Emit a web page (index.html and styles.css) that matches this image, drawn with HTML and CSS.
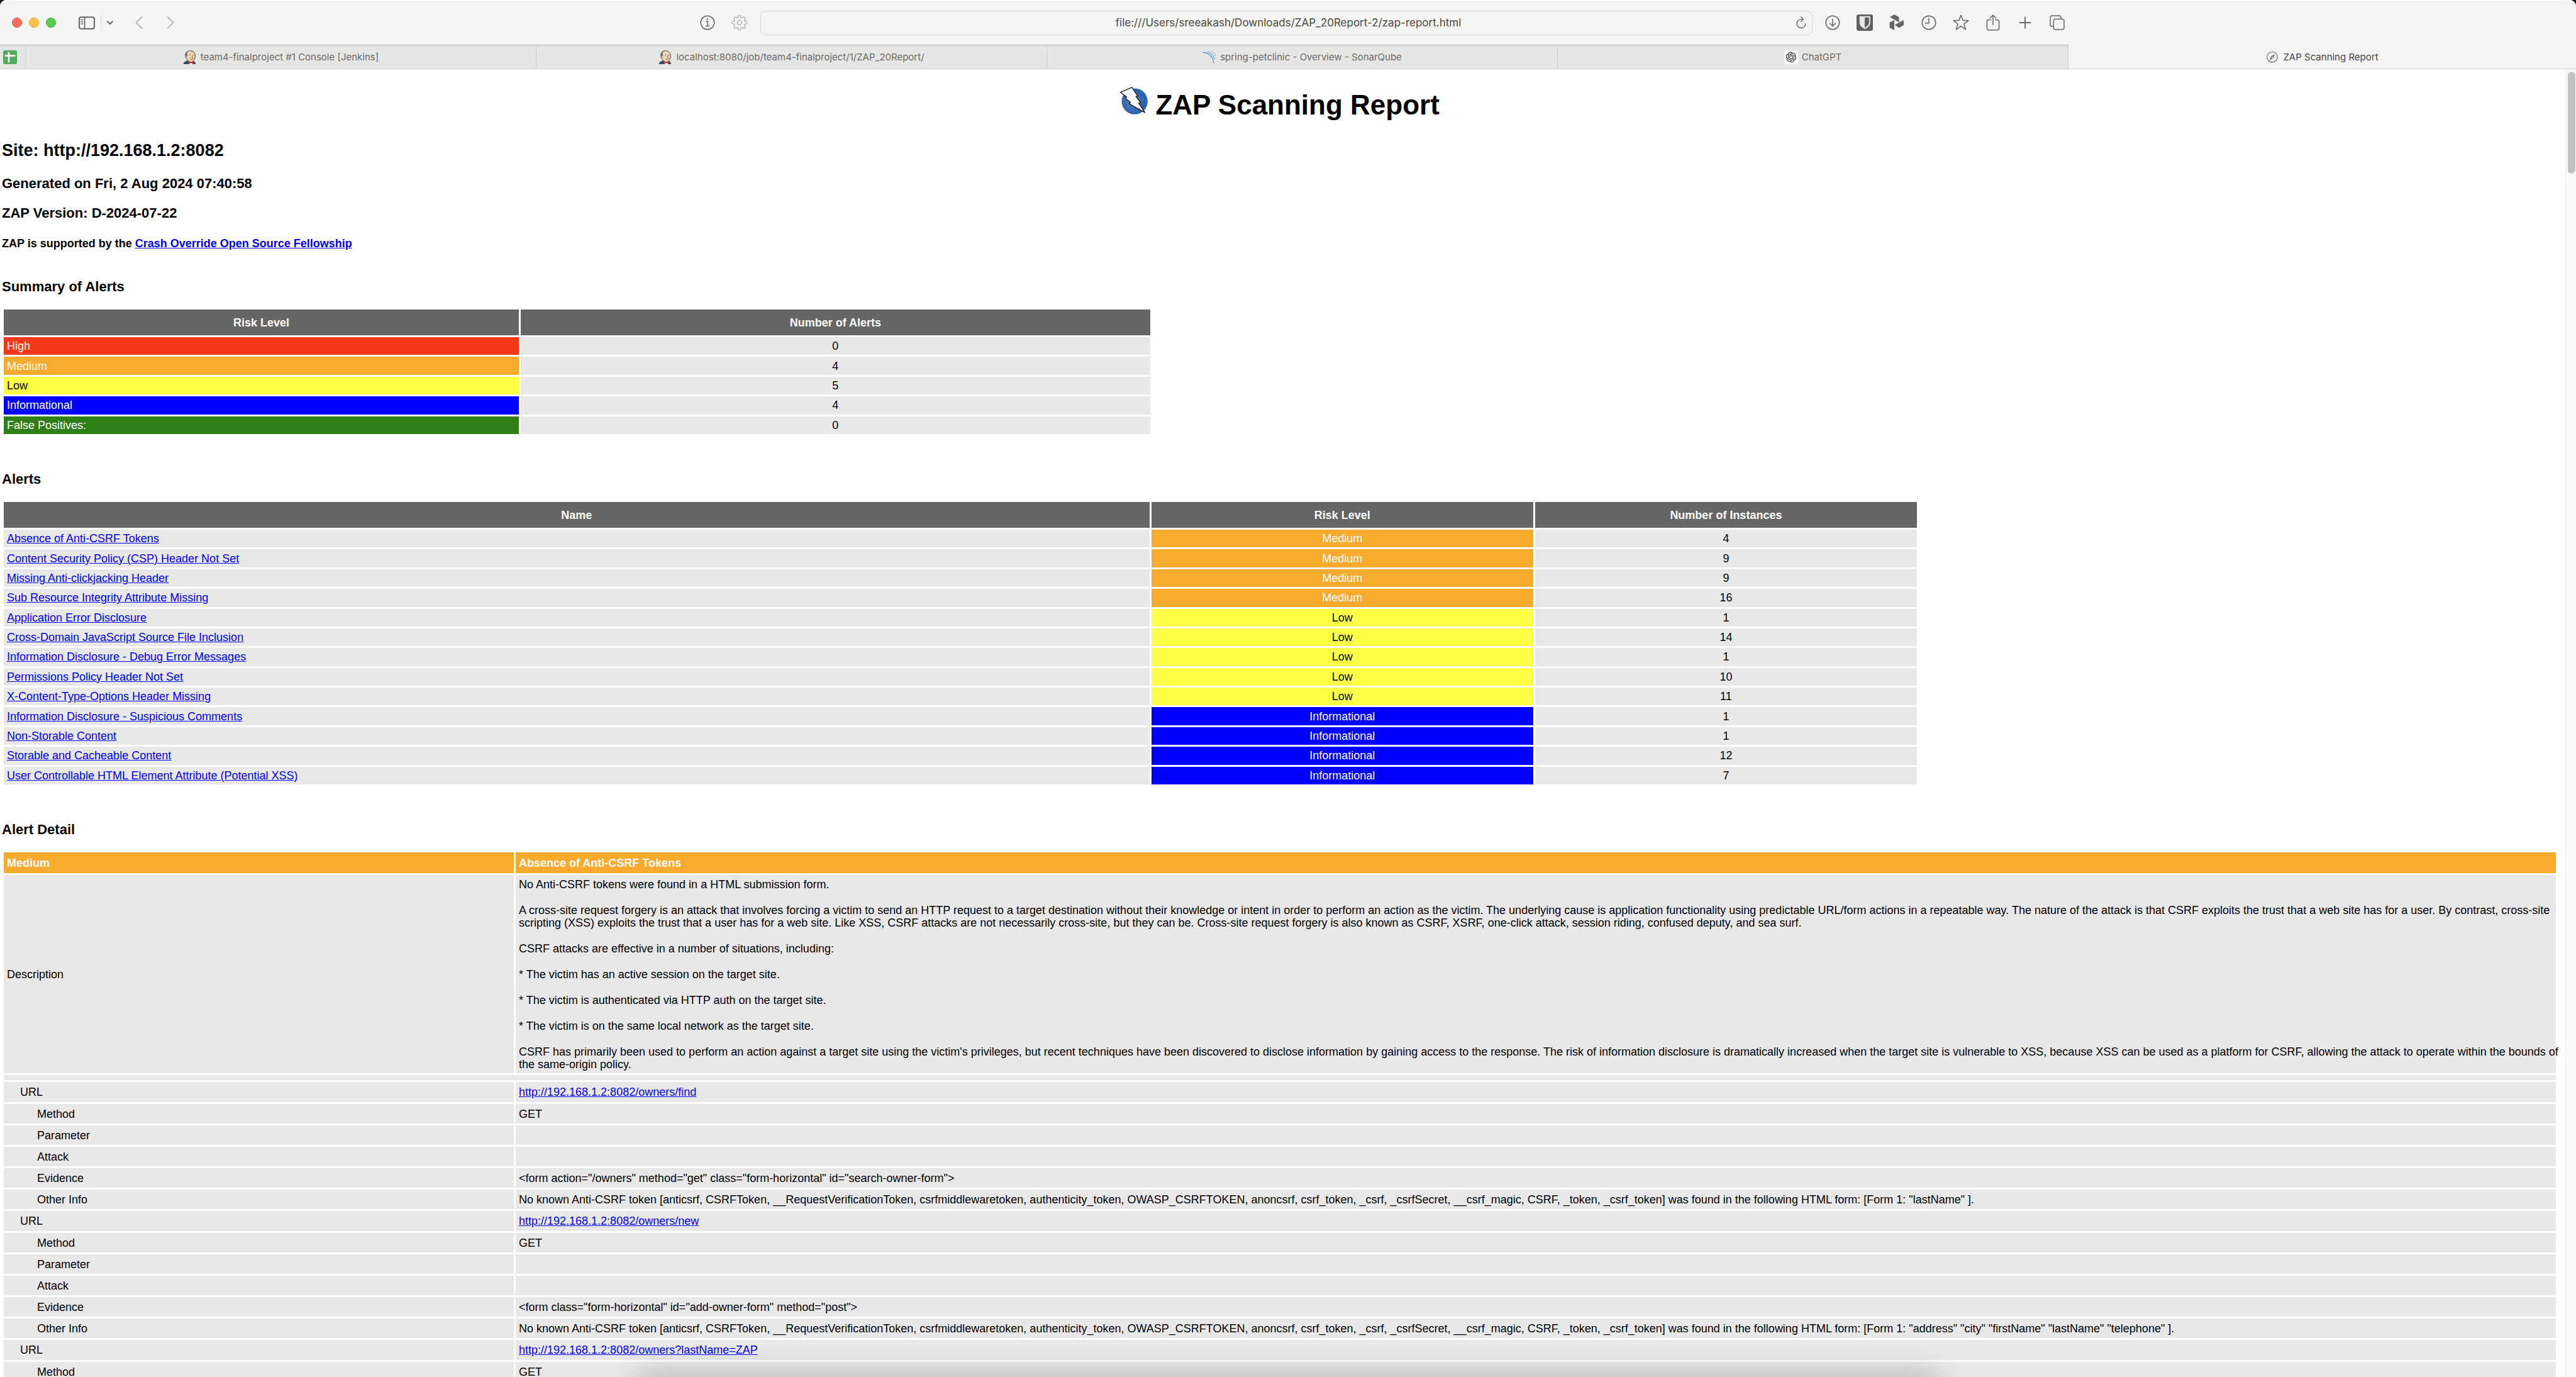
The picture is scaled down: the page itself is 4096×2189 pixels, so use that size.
FILE: index.html
```html
<!DOCTYPE html>
<html lang="en">
<head>
<meta charset="utf-8">
<title>ZAP Scanning Report</title>
<link rel="stylesheet" href="styles.css">
</head>
<body>
<svg class="defs" aria-hidden="true">
  <symbol id="jenkins" viewBox="0 0 32 32">
    <path d="M1 32c0-4 2-6 6-7l3-2h12l3 2c3 1 4 3 4 7z" fill="#335061"/>
    <path d="M12 23l3 9h7l-2-9z" fill="#f2f2ee"/>
    <path d="M6 14C4 7 9 1 16 1c8 0 12 5 12 12 0 8-4 14-9 14-6 0-10-4-11-9-2 0-3-2-2-4z" fill="#ecd6b4" stroke="#33302c" stroke-width="1.3"/>
    <path d="M6 13C4 7 8 2 13 1.500c-3 2-4 5-3 9l-1 4-2 1z" fill="#6c6a66"/>
    <path d="M15 11l3-1M22 11l3 0M21 13v4l2 1M17 20c3 2 5 1 6-1" fill="none" stroke="#4c3c30" stroke-width="1.2"/>
    <path d="M13 25l5 2 6-2v6l-6-2-5 2z" fill="#d33833"/>
  </symbol>
</svg>
<div class="window">
  <header class="toolbar">
    <div class="toolbar-left">
      <div class="lights">
        <button class="light light-close" aria-label="Close"></button>
        <button class="light light-min" aria-label="Minimise"></button>
        <button class="light light-max" aria-label="Zoom"></button>
      </div>
      <button class="tool sidebar-btn" aria-label="Sidebar"><svg width="26" height="21" viewBox="0 0 38 30"><rect x="1.500" y="1.500" width="35" height="27" rx="4.500" fill="none" stroke="currentColor" stroke-width="3"/><path d="M14 1v28" stroke="currentColor" stroke-width="2.500"/><path d="M5.500 8h4.500M5.500 12.500h4.500M5.500 17h4.500" stroke="currentColor" stroke-width="1.800" stroke-linecap="round"/></svg></button>
      <span class="tool-divider"></span>
      <button class="tool menu-btn" aria-label="Tab groups"><svg width="10" height="6" viewBox="0 0 15 9"><path d="M1.500 1.500l6 6 6-6" fill="none" stroke="currentColor" stroke-width="2.800" stroke-linecap="round" stroke-linejoin="round"/></svg></button>
      <button class="tool nav-btn dim" aria-label="Back"><svg width="12" height="20" viewBox="0 0 17 29"><path d="M15 1.500L2 14.500l13 13" fill="none" stroke="currentColor" stroke-width="2.600" stroke-linecap="round" stroke-linejoin="round"/></svg></button>
      <button class="tool nav-btn dim" aria-label="Forward"><svg width="12" height="20" viewBox="0 0 17 29"><path d="M2 1.500l13 13-13 13" fill="none" stroke="currentColor" stroke-width="2.600" stroke-linecap="round" stroke-linejoin="round"/></svg></button>
      <span class="spacer"></span>
      <button class="tool icon-btn" aria-label="Page info"><svg width="24" height="24" viewBox="0 0 35 35"><circle cx="17.500" cy="17.500" r="15.700" fill="none" stroke="currentColor" stroke-width="2.200"/><circle cx="17.300" cy="9.500" r="1.900" fill="currentColor"/><path d="M14 14.500h4v10.500M13.300 25.500h8.500" fill="none" stroke="currentColor" stroke-width="2.200"/></svg></button>
      <button class="tool icon-btn dim" aria-label="Settings"><svg width="26" height="26" viewBox="-19 -19 38 38"><g fill="none" stroke="currentColor" stroke-width="2.200" stroke-linecap="round" stroke-linejoin="round"><path id="tooth" d="M-3.600-12.500L-2.400-16.400Q0-18 2.400-16.400L3.600-12.500Q5-10.800 6.300-11.400"/><use href="#tooth" transform="rotate(45)"/><use href="#tooth" transform="rotate(90)"/><use href="#tooth" transform="rotate(135)"/><use href="#tooth" transform="rotate(180)"/><use href="#tooth" transform="rotate(225)"/><use href="#tooth" transform="rotate(270)"/><use href="#tooth" transform="rotate(315)"/><circle r="5"/></g></svg></button>
    </div>
    <form class="address">
      <input class="address-input" type="text" aria-label="Address" value="file:///Users/sreeakash/Downloads/ZAP_20Report-2/zap-report.html">
      <button class="tool reload" type="button" aria-label="Reload"><svg width="18" height="20" viewBox="0 0 26 29"><path d="M17 7H13a10 10 0 1 0 10 10" fill="none" stroke="currentColor" stroke-width="2" stroke-linecap="round"/><path d="M12.500 1.500L18 7l-5.500 5.500" fill="none" stroke="currentColor" stroke-width="2" stroke-linecap="round" stroke-linejoin="round"/></svg></button>
    </form>
    <div class="toolbar-right">
      <button class="tool icon-btn" aria-label="Downloads"><svg width="24" height="24" viewBox="0 0 35 35"><g fill="none" stroke="currentColor" stroke-width="2.200" stroke-linecap="round" stroke-linejoin="round"><circle cx="17.500" cy="17.500" r="15.700"/><path d="M17.500 9v16M11.500 19.500l6 6 6-6"/></g></svg></button>
      <button class="tool icon-btn" aria-label="Bitwarden"><svg width="26" height="26" viewBox="0 0 38 38"><rect width="38" height="38" rx="5" fill="#5f5f5d"/><path d="M7 4h25v15c0 8-7 12-12.500 15C14 31 7 27 7 19z" fill="#e6e6e4"/><path d="M19 7h10v12c0 5-5 9-10 11.500z" fill="#5f5f5d"/></svg></button>
      <button class="tool icon-btn" aria-label="Extension"><svg width="26" height="26" viewBox="0 0 38 38"><path d="M2.700 6L13.300 0l11 6.300v12zM2.300 18.700l11-6V37l-11-6.300zM14 24.300l21-11.600v12L24.300 31z" fill="currentColor"/></svg></button>
      <button class="tool icon-btn" aria-label="History"><svg width="24" height="24" viewBox="0 0 35 35"><g fill="none" stroke="currentColor" stroke-width="2.200" stroke-linecap="round" stroke-linejoin="round"><circle cx="17.500" cy="17.500" r="15.700"/><path d="M17.500 7v11.500H9"/></g></svg></button>
      <button class="tool icon-btn" aria-label="Bookmark"><svg width="26" height="26" viewBox="0 0 38 38"><path d="M19 1.500l4.500 12.200 13 .4-10.300 8 3.800 12.700-11-7.500-11 7.500 3.800-12.700-10.300-8 13-.4z" fill="none" stroke="currentColor" stroke-width="2.200" stroke-linejoin="round"/></svg></button>
      <button class="tool icon-btn" aria-label="Share"><svg width="26" height="26" viewBox="0 0 38 38"><g fill="none" stroke="currentColor" stroke-width="2.200" stroke-linecap="round" stroke-linejoin="round"><path d="M14 12.500H9a4 4 0 0 0-4 4V32a4 4 0 0 0 4 4h20a4 4 0 0 0 4-4V16.500a4 4 0 0 0-4-4h-5M19 24V1.500M12.500 8L19 1.500 25.500 8"/></g></svg></button>
      <button class="tool icon-btn" aria-label="New tab"><svg width="20" height="20" viewBox="0 0 29 29"><path d="M14.500 2v25M2 14.500h25" stroke="currentColor" stroke-width="2.600" stroke-linecap="round"/></svg></button>
      <button class="tool icon-btn" aria-label="Tab overview"><svg width="24" height="24" viewBox="0 0 36 36"><g fill="none" stroke="currentColor" stroke-width="2.200"><path d="M9 27H6a4.500 4.500 0 0 1-4.500-4.500V6A4.500 4.500 0 0 1 6 1.500h16.500A4.500 4.500 0 0 1 27 6v3"/><rect x="9.500" y="9.500" width="25" height="25" rx="4.500"/></g></svg></button>
    </div>
  </header>

  <nav class="tabs" aria-label="Tabs">
    <a class="tab tab-pinned" href="#" aria-label="Sheets"><svg width="22" height="22" viewBox="0 0 32 32"><rect width="32" height="32" rx="4" fill="#53a95c"/><path d="M13 4v24M4 12.700h24" stroke="#fff" stroke-width="4"/></svg></a>
    <a class="tab" href="#"><svg width="22" height="22"><use href="#jenkins"/></svg>team4-finalproject #1 Console [Jenkins]</a>
    <a class="tab" href="#"><svg width="22" height="22"><use href="#jenkins"/></svg>localhost:8080/job/team4-finalproject/1/ZAP_20Report/</a>
    <a class="tab" href="#"><svg width="22" height="22" viewBox="0 0 32 32"><g fill="none" stroke="#549dd8"><path d="M1 4.700C15 5 26 17 26 30.700" stroke-width="2"/><path d="M11.500 2.500C20 6 26 13 28.700 21" stroke-width="1.600"/><path d="M20.500 1.500C25 4.500 28.500 8.500 30.700 13" stroke-width="1.200"/></g></svg>spring-petclinic - Overview - SonarQube</a>
    <a class="tab" href="#"><svg width="22" height="22" viewBox="-4 -4 32 32"><rect x="-4" y="-4" width="32" height="32" rx="5" fill="#fff"/><path fill="#222" d="M22.2819 9.8211a5.9847 5.9847 0 0 0-.5157-4.9108 6.0462 6.0462 0 0 0-6.5098-2.9A6.0651 6.0651 0 0 0 4.9807 4.1818a5.9847 5.9847 0 0 0-3.9977 2.9 6.0462 6.0462 0 0 0 .7427 7.0966 5.98 5.98 0 0 0 .511 4.9107 6.051 6.051 0 0 0 6.5146 2.9001A5.9847 5.9847 0 0 0 13.2599 24a6.0557 6.0557 0 0 0 5.7718-4.2058 5.9894 5.9894 0 0 0 3.9977-2.9001 6.0557 6.0557 0 0 0-.7475-7.0729zm-9.022 12.6081a4.4755 4.4755 0 0 1-2.8764-1.0408l.1419-.0804 4.7783-2.7582a.7948.7948 0 0 0 .3927-.6813v-6.7369l2.02 1.1686a.071.071 0 0 1 .038.052v5.5826a4.504 4.504 0 0 1-4.4945 4.4944zm-9.6607-4.1254a4.4708 4.4708 0 0 1-.5346-3.0137l.142.0852 4.783 2.7582a.7712.7712 0 0 0 .7806 0l5.8428-3.3685v2.3324a.0804.0804 0 0 1-.0332.0615L9.74 19.9502a4.4992 4.4992 0 0 1-6.1408-1.6464zM2.3408 7.8956a4.485 4.485 0 0 1 2.3655-1.9728V11.6a.7664.7664 0 0 0 .3879.6765l5.8144 3.3543-2.0201 1.1685a.0757.0757 0 0 1-.071 0l-4.8303-2.7865A4.504 4.504 0 0 1 2.3408 7.872zm16.5963 3.8558L13.1038 8.364 15.1192 7.2a.0757.0757 0 0 1 .071 0l4.8303 2.7913a4.4944 4.4944 0 0 1-.6765 8.1042v-5.6772a.79.79 0 0 0-.407-.667zm2.0107-3.0231l-.142-.0852-4.7735-2.7818a.7759.7759 0 0 0-.7854 0L9.409 9.2297V6.8974a.0662.0662 0 0 1 .0284-.0615l4.8303-2.7866a4.4992 4.4992 0 0 1 6.6802 4.66zM8.3065 12.863l-2.02-1.1638a.0804.0804 0 0 1-.038-.0567V6.0742a4.4992 4.4992 0 0 1 7.3757-3.4537l-.142.0805L8.704 5.459a.7948.7948 0 0 0-.3927.6813zm1.0976-2.3654l2.602-1.4998 2.6069 1.4998v2.9994l-2.5974 1.4997-2.6067-1.4997Z"/></svg>ChatGPT</a>
    <a class="tab tab-active" href="#" aria-current="page"><svg width="22" height="22" viewBox="0 0 32 32"><circle cx="16" cy="15.500" r="12" fill="none" stroke="#6a6a68" stroke-width="1.800"/><path d="M22 8.500l-3.500 9-9 5.500 3.500-9z" fill="#6a6a68"/><circle cx="16" cy="15.700" r="1.400" fill="#f4f4f2"/></svg>ZAP Scanning Report</a>
  </nav>

  <div class="viewport">
    <main class="report">
      <h1><svg class="logo" width="44" height="44" viewBox="0 0 192 192"><defs><radialGradient id="ball" cx="0.400" cy="0.500" r="0.600"><stop offset="0" stop-color="#5c7cb8"/><stop offset="0.700" stop-color="#2f66b0"/><stop offset="1" stop-color="#1d5fae"/></radialGradient></defs><circle cx="101" cy="101" r="90" fill="url(#ball)"/><path d="M82 4L3 38l42 32-7 11 33 26-7 11 108 60-43-65 14-4-33-41 12-4z" fill="#fff" stroke="#1c1c1c" stroke-width="6" stroke-linejoin="round"/></svg> ZAP Scanning Report</h1>
      <h2>Site: http://192.168.1.2:8082</h2>
      <h3 class="generated">Generated on Fri, 2 Aug 2024 07:40:58</h3>
      <h3 class="version">ZAP Version: D-2024-07-22</h3>
      <h4>ZAP is supported by the <a href="#">Crash Override Open Source Fellowship</a></h4>

      <h3 class="summary-title">Summary of Alerts</h3>
      <table class="summary">
        <colgroup><col class="w45"><col class="w55"></colgroup>
        <thead><tr><th>Risk Level</th><th>Number of Alerts</th></tr></thead>
        <tbody>
          <tr><td class="high">High</td><td class="num">0</td></tr>
          <tr><td class="medium">Medium</td><td class="num">4</td></tr>
          <tr><td class="low">Low</td><td class="num">5</td></tr>
          <tr><td class="info">Informational</td><td class="num">4</td></tr>
          <tr><td class="false-positive">False Positives:</td><td class="num">0</td></tr>
        </tbody>
      </table>

      <h3 class="section-title">Alerts</h3>
      <table class="alerts">
        <colgroup><col class="w60"><col class="w20"><col class="w20"></colgroup>
        <thead><tr><th>Name</th><th>Risk Level</th><th>Number of Instances</th></tr></thead>
        <tbody>
          <tr><td><a href="#detail">Absence of Anti-CSRF Tokens</a></td><td class="num medium">Medium</td><td class="num">4</td></tr>
          <tr><td><a href="#">Content Security Policy (CSP) Header Not Set</a></td><td class="num medium">Medium</td><td class="num">9</td></tr>
          <tr><td><a href="#">Missing Anti-clickjacking Header</a></td><td class="num medium">Medium</td><td class="num">9</td></tr>
          <tr><td><a href="#">Sub Resource Integrity Attribute Missing</a></td><td class="num medium">Medium</td><td class="num">16</td></tr>
          <tr><td><a href="#">Application Error Disclosure</a></td><td class="num low">Low</td><td class="num">1</td></tr>
          <tr><td><a href="#">Cross-Domain JavaScript Source File Inclusion</a></td><td class="num low">Low</td><td class="num">14</td></tr>
          <tr><td><a href="#">Information Disclosure - Debug Error Messages</a></td><td class="num low">Low</td><td class="num">1</td></tr>
          <tr><td><a href="#">Permissions Policy Header Not Set</a></td><td class="num low">Low</td><td class="num">10</td></tr>
          <tr><td><a href="#">X-Content-Type-Options Header Missing</a></td><td class="num low">Low</td><td class="num">11</td></tr>
          <tr><td><a href="#">Information Disclosure - Suspicious Comments</a></td><td class="num info">Informational</td><td class="num">1</td></tr>
          <tr><td><a href="#">Non-Storable Content</a></td><td class="num info">Informational</td><td class="num">1</td></tr>
          <tr><td><a href="#">Storable and Cacheable Content</a></td><td class="num info">Informational</td><td class="num">12</td></tr>
          <tr><td><a href="#">User Controllable HTML Element Attribute (Potential XSS)</a></td><td class="num info">Informational</td><td class="num">7</td></tr>
        </tbody>
      </table>

      <h3 class="section-title" id="detail">Alert Detail</h3>
      <table class="detail">
        <colgroup><col class="w20"><col class="w80"></colgroup>
        <thead><tr><th class="medium">Medium</th><th class="medium">Absence of Anti-CSRF Tokens</th></tr></thead>
        <tbody>
          <tr>
            <td>Description</td>
            <td class="description">
              <p>No Anti-CSRF tokens were found in a HTML submission form.</p>
              <p>A cross-site request forgery is an attack that involves forcing a victim to send an HTTP request to a target destination without their knowledge or intent in order to perform an action as the victim. The underlying cause is application functionality using predictable URL/form actions in a repeatable way. The nature of the attack is that CSRF exploits the trust that a web site has for a user. By contrast, cross-site scripting (XSS) exploits the trust that a user has for a web site. Like XSS, CSRF attacks are not necessarily cross-site, but they can be. Cross-site request forgery is also known as CSRF, XSRF, one-click attack, session riding, confused deputy, and sea surf.</p>
              <p>CSRF attacks are effective in a number of situations, including:</p>
              <p>* The victim has an active session on the target site.</p>
              <p>* The victim is authenticated via HTTP auth on the target site.</p>
              <p>* The victim is on the same local network as the target site.</p>
              <p>CSRF has primarily been used to perform an action against a target site using the victim's privileges, but recent techniques have been discovered to disclose information by gaining access to the response. The risk of information disclosure is dramatically increased when the target site is vulnerable to XSS, because XSS can be used as a platform for CSRF, allowing the attack to operate within the bounds of the same-origin policy.</p>
            </td>
          </tr>
          <tr class="gap-row"><td colspan="2"></td></tr>
          <tr class="url-row"><td class="indent1">URL</td><td><a href="#">http://192.168.1.2:8082/owners/find</a></td></tr>
          <tr><td class="indent2">Method</td><td>GET</td></tr>
          <tr><td class="indent2">Parameter</td><td></td></tr>
          <tr><td class="indent2">Attack</td><td></td></tr>
          <tr><td class="indent2">Evidence</td><td>&lt;form action="/owners" method="get" class="form-horizontal" id="search-owner-form"&gt;</td></tr>
          <tr><td class="indent2">Other Info</td><td>No known Anti-CSRF token [anticsrf, CSRFToken, __RequestVerificationToken, csrfmiddlewaretoken, authenticity_token, OWASP_CSRFTOKEN, anoncsrf, csrf_token, _csrf, _csrfSecret, __csrf_magic, CSRF, _token, _csrf_token] was found in the following HTML form: [Form 1: "lastName" ].</td></tr>
          <tr class="url-row"><td class="indent1">URL</td><td><a href="#">http://192.168.1.2:8082/owners/new</a></td></tr>
          <tr><td class="indent2">Method</td><td>GET</td></tr>
          <tr><td class="indent2">Parameter</td><td></td></tr>
          <tr><td class="indent2">Attack</td><td></td></tr>
          <tr><td class="indent2">Evidence</td><td>&lt;form class="form-horizontal" id="add-owner-form" method="post"&gt;</td></tr>
          <tr><td class="indent2">Other Info</td><td>No known Anti-CSRF token [anticsrf, CSRFToken, __RequestVerificationToken, csrfmiddlewaretoken, authenticity_token, OWASP_CSRFTOKEN, anoncsrf, csrf_token, _csrf, _csrfSecret, __csrf_magic, CSRF, _token, _csrf_token] was found in the following HTML form: [Form 1: "address" "city" "firstName" "lastName" "telephone" ].</td></tr>
          <tr class="url-row"><td class="indent1">URL</td><td><a href="#">http://192.168.1.2:8082/owners?lastName=ZAP</a></td></tr>
          <tr><td class="indent2">Method</td><td>GET</td></tr>
        </tbody>
      </table>
    </main>
    <div class="scrollbar"><div class="thumb"></div></div>
    <div class="dock-shadow"></div>
  </div>
</div>
</body>
</html>
```
FILE: styles.css
```css
* { box-sizing: border-box; }

body {
  margin: 0;
  background: #1c1c1c;
  color: #000;
  font-family: "Liberation Sans", Arial, sans-serif;
  font-size: 18px;
  line-height: 20px;
}

.defs {
  position: absolute;
  width: 0;
  height: 0;
}

.window {
  display: flex;
  flex-direction: column;
  height: 100vh;
  overflow: hidden;
  border-radius: 10px 10px 0 0;
  background: #fff;
}

/* Toolbar */

.toolbar {
  display: grid;
  grid-template-columns: 1209fr 1673fr 1214fr;
  flex: none;
  align-items: center;
  height: 71px;
  border-top: 1px solid #fdfdfd;
  background: #f4f4f2;
  color: #666664;
}

.toolbar-left,
.toolbar-right {
  display: flex;
  align-items: center;
}

.toolbar-left { padding: 0 8px 0 19px; }
.toolbar-right { padding-left: 6px; }

.lights {
  display: flex;
  gap: 11px;
  margin-right: 36px;
}

.light {
  width: 16px;
  height: 16px;
  padding: 0;
  border: 1px solid;
  border-radius: 50%;
}

.light-close { background: #f46d5f; border-color: #dd5a4c; }
.light-min { background: #f9c045; border-color: #dfa736; }
.light-max { background: #5ac94f; border-color: #46ae3c; }

.tool {
  display: flex;
  align-items: center;
  justify-content: center;
  padding: 0;
  border: 0;
  background: none;
  color: inherit;
}

.tool.dim { color: #b4b4b2; }

.tool-divider {
  width: 1px;
  height: 26px;
  margin: 0 9px;
  background: #dededc;
}

.menu-btn { margin-right: 35px; }
.nav-btn { margin-right: 38px; }
.icon-btn { width: 51px; height: 36px; }
.spacer { flex: 1; }

.address {
  display: flex;
  align-items: center;
  height: 39px;
  padding: 0 8px 0 32px;
  border: 1px solid #d6d6d4;
  border-radius: 9px;
}

.address-input {
  flex: 1;
  min-width: 0;
  padding: 0;
  border: 0;
  background: none;
  color: #484846;
  font-family: Inter, "Liberation Sans", sans-serif;
  font-size: 17px;
  text-align: center;
}

/* Tabs */

.tabs {
  display: grid;
  grid-template-columns: 41px repeat(4, 812fr) 807fr;
  flex: none;
  height: 39px;
  border-bottom: 1px solid #d3d3d1;
  font-family: Inter, "Liberation Sans", sans-serif;
  font-size: 15px;
}

.tab {
  display: flex;
  align-items: center;
  justify-content: center;
  gap: 6px;
  border-top: 1px solid #c3c3c1;
  border-right: 1px solid #cfcfcd;
  background: linear-gradient(#dadad8, #e6e6e4 4px);
  color: #6a6a68;
  text-decoration: none;
}

.tab-pinned { padding-right: 9px; }

.tab-active {
  border-color: transparent;
  background: #f4f4f2;
  color: #444442;
}

/* Page */

.viewport {
  position: relative;
  display: flex;
  flex: 1;
  min-height: 0;
  overflow: hidden;
}

.report {
  flex: 1;
  padding: 28px 12px 0 3px;
}

.scrollbar {
  flex: none;
  width: 17px;
  padding: 4px 1px 0 3px;
  border-left: 1px solid #e8e8e8;
  background: #fafafa;
}

.thumb {
  height: 162px;
  border-radius: 6px;
  background: #c1c1c1;
}

.dock-shadow {
  position: absolute;
  right: 25%;
  bottom: -32px;
  left: 25%;
  height: 20px;
  box-shadow: 0 0 50px 10px rgba(0, 0, 0, 0.3);
}

h1, h2, h3, h4 { margin: 0; }

h1 {
  font-size: 44px;
  line-height: 50px;
  text-align: center;
}

h2 {
  margin-top: 32px;
  font-size: 27px;
  line-height: 31px;
}

h3 {
  font-size: 22px;
  line-height: 25px;
}

h4 {
  margin-top: 26px;
  font-size: 18px;
}

.generated { margin-top: 24px; }
.version { margin-top: 22px; }
.summary-title { margin: 46px 0 21px; }
.section-title { margin: 56px 0 21px; }

a { color: #0000ee; }

/* Tables */

table {
  table-layout: fixed;
  border-collapse: separate;
  border-spacing: 3px;
}

th, td {
  padding: 0 5px;
  vertical-align: middle;
}

th {
  height: 41px;
  background: #666;
  color: #fff;
}

td { background: #e8e8e8; }

.summary { width: 45%; height: 204px; }
.alerts { width: 75%; height: 455px; }
.detail { width: 100%; }

.w20 { width: 20%; }
.w45 { width: 45%; }
.w55 { width: 55%; }
.w60 { width: 60%; }
.w80 { width: 80%; }

.num { text-align: center; }

.high { background: #f23818; color: #fff; }
.medium { background: #f6ab2e; color: #fff; }
.low { background: #ffff45; }
.info { background: #0000fe; color: #fff; }
.false-positive { background: #2f7e18; color: #fff; }

.detail th {
  height: 33px;
  text-align: left;
}

.detail td { height: 31px; }
.detail .url-row td { height: 32px; }
.detail .gap-row td { height: 8px; padding: 0; }
.detail .indent1 { padding-left: 26px; }
.detail .indent2 { padding-left: 53px; }
.detail .description { padding: 5px 0 4px 5px; }

.description p { margin: 0 -8px 21px 0; }
.description p:last-child { margin-bottom: 0; }
```
